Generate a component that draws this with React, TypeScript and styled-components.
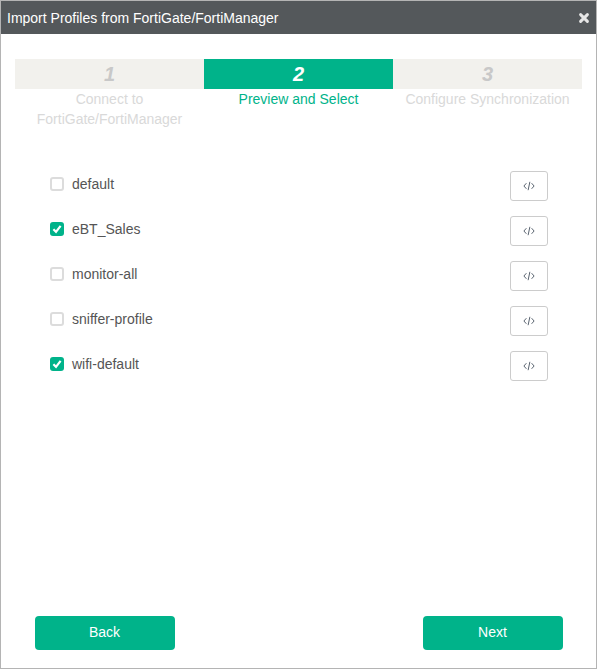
import React from 'react';
import styled, { createGlobalStyle } from 'styled-components';

const GlobalStyle = createGlobalStyle`
  html, body {
    margin: 0;
    padding: 0;
    background: #fff;
  }
`;

const steps = [
  { num: 1, label: 'Connect to FortiGate/FortiManager' },
  { num: 2, label: 'Preview and Select' },
  { num: 3, label: 'Configure Synchronization' },
];

const profiles = [
  { name: 'default', checked: false },
  { name: 'eBT_Sales', checked: true },
  { name: 'monitor-all', checked: false },
  { name: 'sniffer-profile', checked: false },
  { name: 'wifi-default', checked: true },
];

const App = () => {
  return (
    <Dialog>
      <GlobalStyle />
      <Header>
        <Title>Import Profiles from FortiGate/FortiManager</Title>
        <Close viewBox="0 0 12 12">
          <path d="M2.6 2.6 L9.4 9.4 M9.4 2.6 L2.6 9.4" stroke="#e6e6e6" strokeWidth="3" strokeLinecap="round" fill="none" />
        </Close>
      </Header>
      <Body>
        <Steps>
          {steps.map((s) => (
            <Step key={s.num}>
              <StepBar $active={s.num === 2}>{s.num}</StepBar>
              <StepLabel $active={s.num === 2}>{s.label}</StepLabel>
            </Step>
          ))}
        </Steps>
        <List>
          {profiles.map((p) => (
            <Row key={p.name}>
              <Check $checked={p.checked}>
                {p.checked && (
                  <svg width="10" height="10" viewBox="0 0 10 10">
                    <path d="M1.4 5.2 L4 7.8 L8.6 1.8" stroke="#fff" strokeWidth="2.2" fill="none" />
                  </svg>
                )}
              </Check>
              <RowName>{p.name}</RowName>
              <CodeButton>
                <svg width="12" height="10" viewBox="0 0 12 10">
                  <path d="M3.4 2.2 L0.9 5 L3.4 7.8 M8.6 2.2 L11.1 5 L8.6 7.8" stroke="#5a6470" strokeWidth="1" fill="none" />
                  <path d="M6.9 0.8 L5.1 9.2" stroke="#5a6470" strokeWidth="1" fill="none" />
                </svg>
              </CodeButton>
            </Row>
          ))}
        </List>
        <Footer>
          <ActionButton>Back</ActionButton>
          <ActionButton>Next</ActionButton>
        </Footer>
      </Body>
    </Dialog>
  );
};
export default App;

const Dialog = styled.div`
  box-sizing: border-box;
  width: 597px;
  height: 669px;
  border: 1px solid #b4b4b4;
  display: flex;
  flex-direction: column;
  font-family: "Liberation Sans", Arial, sans-serif;
  font-size: 14px;
  background: #fff;
`;

const Header = styled.div`
  height: 33px;
  flex: none;
  background: #54585b;
  display: flex;
  align-items: center;
  justify-content: space-between;
  padding: 0 6px;
`;

const Title = styled.div`
  color: #fff;
  font-size: 14px;
`;

const Close = styled.svg`
  width: 12px;
  height: 12px;
`;

const Body = styled.div`
  flex: 1;
  display: flex;
  flex-direction: column;
  padding: 25px 14px 18px 14px;
`;

const Steps = styled.div`
  display: flex;
  width: 567px;
`;

const Step = styled.div`
  width: 189px;
  text-align: center;
`;

const StepBar = styled.div<{ $active: boolean }>`
  height: 30px;
  line-height: 30px;
  background: ${(p) => (p.$active ? '#00b38a' : '#f2f1ed')};
  color: ${(p) => (p.$active ? '#fff' : '#c8c8c8')};
  font-size: 20px;
  font-weight: bold;
  font-style: italic;
`;

const StepLabel = styled.div<{ $active: boolean }>`
  color: ${(p) => (p.$active ? '#00b38a' : '#d9d9d9')};
  line-height: 20px;
`;

const List = styled.div`
  margin-top: 42px;
  display: flex;
  flex-direction: column;
  gap: 15px;
  padding: 0 34px 0 35px;
  flex: 1;
`;

const Row = styled.div`
  height: 30px;
  display: flex;
  align-items: flex-start;
`;

const Check = styled.div<{ $checked: boolean }>`
  box-sizing: border-box;
  width: 14px;
  height: 14px;
  margin-top: 6px;
  border-radius: 3px;
  border: ${(p) => (p.$checked ? 'none' : '2px solid #dcdcdc')};
  background: ${(p) => (p.$checked ? '#00b38a' : '#fff')};
  display: flex;
  align-items: center;
  justify-content: center;
`;

const RowName = styled.div`
  margin-left: 8px;
  flex: 1;
  color: #555;
  line-height: 26px;
`;

const CodeButton = styled.div`
  box-sizing: border-box;
  width: 38px;
  height: 30px;
  border: 1px solid #ccc;
  border-radius: 3px;
  display: flex;
  align-items: center;
  justify-content: center;
`;

const Footer = styled.div`
  display: flex;
  justify-content: space-between;
  padding: 0 19px 0 20px;
`;

const ActionButton = styled.div`
  box-sizing: border-box;
  width: 140px;
  height: 34px;
  line-height: 32px;
  padding-right: 1px;
  background: #00b38a;
  color: #fff;
  border-radius: 4px;
  text-align: center;
`;
